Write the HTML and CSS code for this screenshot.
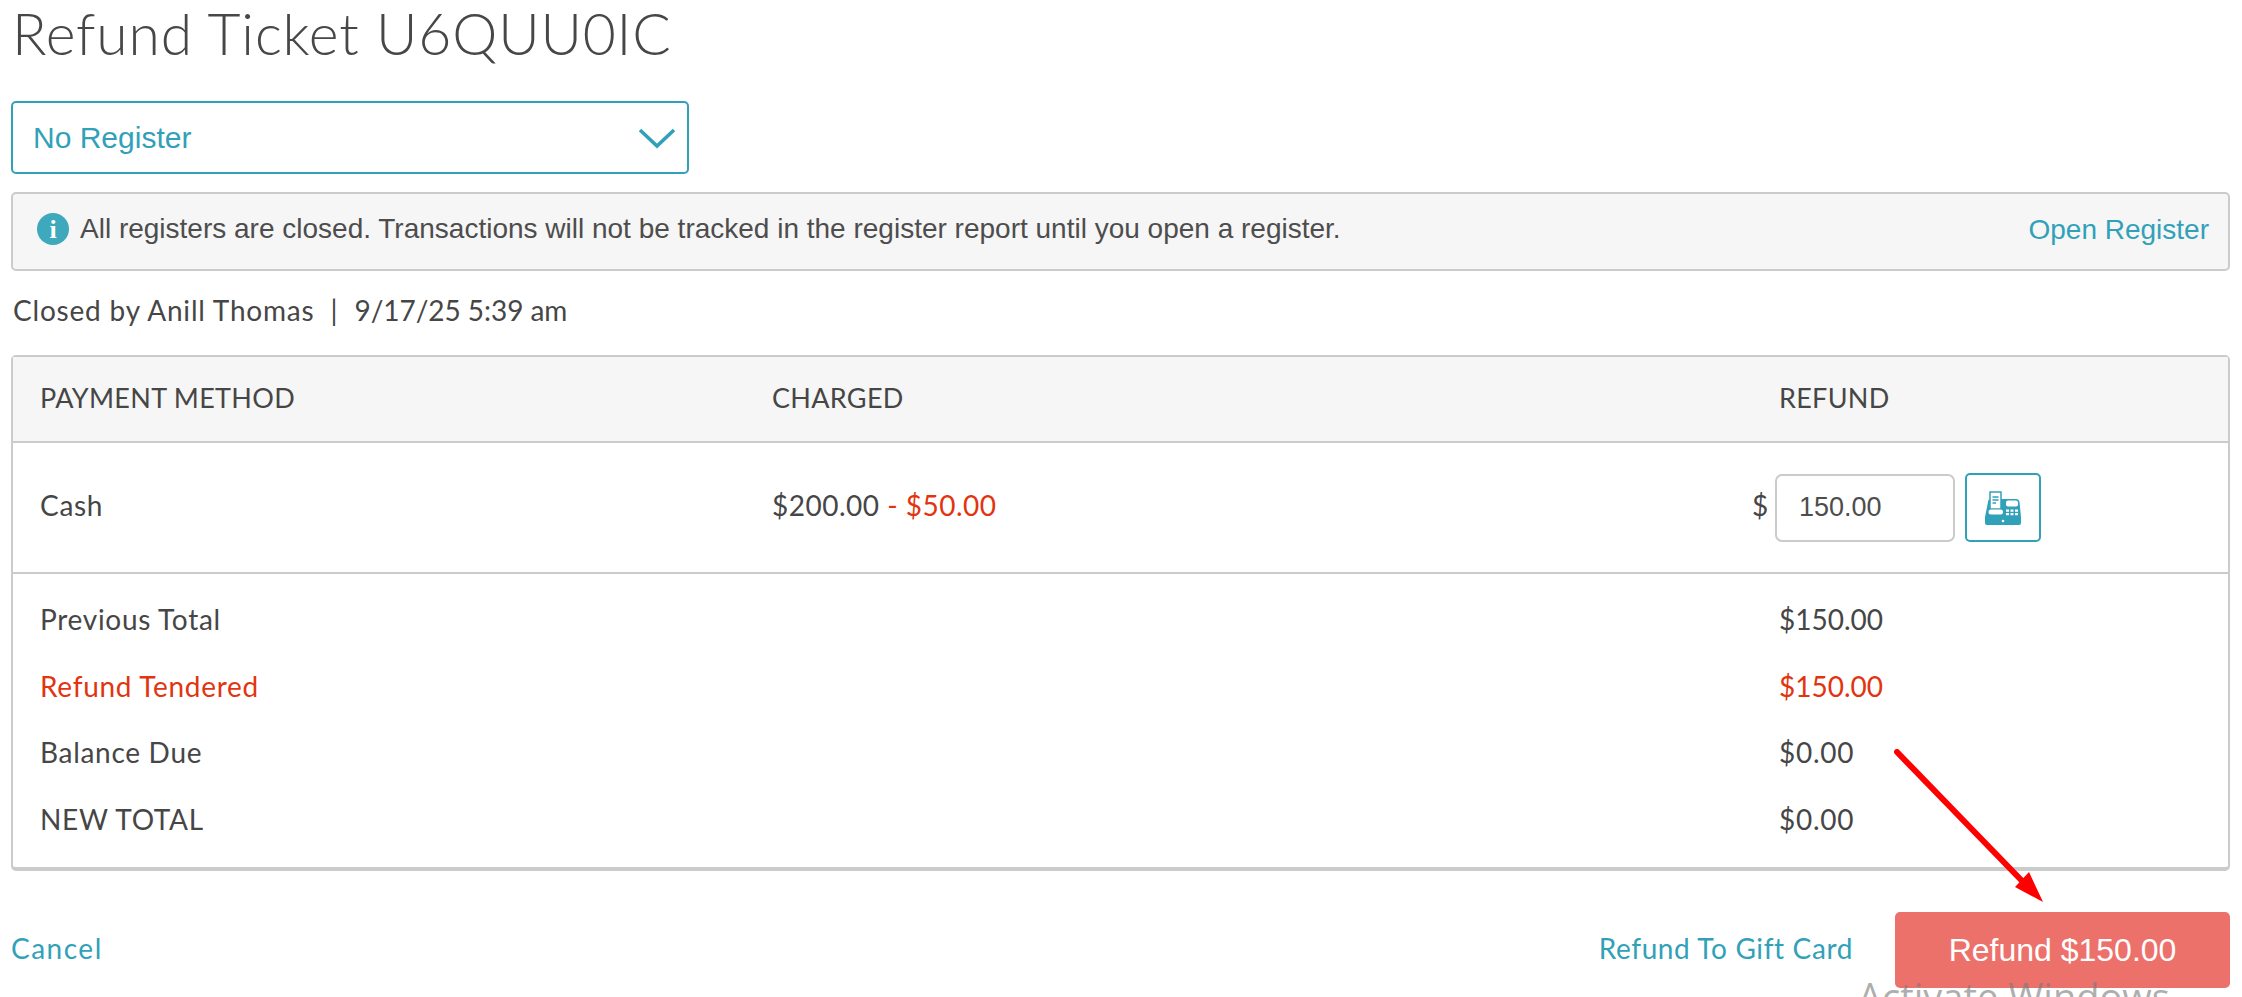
FILE: index.html
```html
<!DOCTYPE html>
<html lang="en">
<head>
<meta charset="utf-8">
<title>Refund Ticket U6QUU0IC</title>
<link rel="stylesheet" href="styles.css">
</head>
<body>
<main class="page">
  <h1 class="title">Refund Ticket U6QUU0IC</h1>
  <div class="select">
    <span>No Register</span>
    <svg class="chevron" width="38" height="22" viewBox="0 0 38 22"><path d="M2 3 L19 19 L36 3" fill="none" stroke="#31a1b9" stroke-width="3.6"/></svg>
  </div>
  <div class="alert">
    <div class="alert-msg">
      <span class="info-icon">i</span>
      <span>All registers are closed. Transactions will not be tracked in the register report until you open a register.</span>
    </div>
    <a class="open-link">Open Register</a>
  </div>
  <p class="closed"><span class="closed-by">Closed by Anill Thomas</span><span class="sep">|</span><span class="closed-at">9/17/25 5:39 am</span></p>
  <section class="panel">
    <div class="row head">
      <div>PAYMENT METHOD</div>
      <div class="span2">CHARGED</div>
      <div>REFUND</div>
    </div>
    <div class="row pay">
      <div class="txt">Cash</div>
      <div class="txt charged">$200.00 <span class="neg">- $50.00</span></div>
      <div class="txt dollar">$</div>
      <div class="refund-cell">
        <input class="amount" type="text" value="150.00">
        <button class="reg-btn" type="button" aria-label="Register">
          <svg width="36" height="34" viewBox="0 0 36 34">
            <path fill="#31a1b9" d="M3 11 q0 -3 3 -3 h25 q3 0 3.500 3 L36 26 H0 Z"/>
            <path fill="#31a1b9" d="M0 26 h36 v6 q0 2 -2 2 H2 q-2 0 -2 -2 Z"/>
            <rect x="5" y="1" width="11" height="17" fill="#fff" stroke="#31a1b9" stroke-width="1.500"/>
            <path d="M7.500 6h6M7.500 9h6M7.500 12h3.500" stroke="#31a1b9" stroke-width="1.600"/>
            <rect x="21" y="9.500" width="12" height="6" rx="2" fill="#fff"/>
            <rect x="3.500" y="18.500" width="14.500" height="5" rx="2.500" fill="#fff"/>
            <path d="M21 18.500h3v2.200h-3zM25.500 18.500h3v2.200h-3zM30 18.500h3v2.200h-3zM21 22h3v2.200h-3zM25.500 22h3v2.200h-3zM30 22h3v2.200h-3z" fill="#fff"/>
            <circle cx="18" cy="30" r="1.300" fill="#fff"/>
          </svg>
        </button>
      </div>
    </div>
    <div class="totals">
      <div class="row total"><div>Previous Total</div><div class="span2"></div><div class="tight">$150.00</div></div>
      <div class="row total neg"><div>Refund Tendered</div><div class="span2"></div><div class="tight">$150.00</div></div>
      <div class="row total"><div>Balance Due</div><div class="span2"></div><div>$0.00</div></div>
      <div class="row total"><div>NEW TOTAL</div><div class="span2"></div><div>$0.00</div></div>
    </div>
  </section>
  <footer class="footer">
    <a class="link cancel">Cancel</a>
    <div class="actions">
      <a class="link">Refund To Gift Card</a>
      <button class="refund-btn" type="button">Refund $150.00</button>
    </div>
  </footer>
</main>
<svg class="arrow" width="160" height="165" viewBox="0 0 160 165">
  <path d="M3 3 L132 136" stroke="#fe0000" stroke-width="6" stroke-linecap="round" fill="none"/>
  <path d="M149 153 L121 138 L135 123 Z" fill="#fe0000"/>
</svg>
<div class="watermark">Activate Windows</div>
</body>
</html>
```
FILE: styles.css
```css
html, body {
  margin: 0;
  padding: 0;
  height: 997px;
  overflow: hidden;
  background: #fff;
}
body {
  font-family: "Lato", "Liberation Sans", sans-serif;
  color: #464646;
  position: relative;
}
.page {
  padding: 0 12px 0 11px;
}
.title {
  margin: 0;
  height: 101px;
  padding: 2px 0 0 1px;
  box-sizing: border-box;
  font-size: 57px;
  line-height: 62px;
  font-weight: 300;
  color: #474747;
  letter-spacing: 0.85px;
}
.select {
  width: 678px;
  height: 73px;
  box-sizing: border-box;
  border: 2px solid #31a1b9;
  border-radius: 5px;
  display: flex;
  align-items: center;
  justify-content: space-between;
  padding: 0 11px 0 20px;
  font-family: "Liberation Sans", sans-serif;
  font-size: 30px;
  color: #31a1b9;
}
.alert {
  margin-top: 18px;
  height: 79px;
  box-sizing: border-box;
  border: 2px solid #cbcbcb;
  border-radius: 5px;
  background: #f6f6f6;
  display: flex;
  justify-content: space-between;
  padding: 0 19px 0 24px;
  font-family: "Liberation Sans", sans-serif;
}
.alert-msg {
  display: flex;
  align-items: center;
  gap: 11px;
  height: 70px;
  font-size: 28px;
  color: #4d4d4d;
}
.info-icon {
  width: 32px;
  height: 32px;
  border-radius: 50%;
  background: #3ea8bd;
  color: #fff;
  font-family: "Liberation Serif", serif;
  font-weight: 700;
  font-size: 26px;
  line-height: 33px;
  text-align: center;
}
.open-link {
  margin-top: 20px;
  font-size: 28px;
  color: #31a1b9;
}
.closed {
  display: flex;
  margin: 24px 0 0 2px;
  height: 60px;
  font-size: 28px;
  line-height: 30px;
}
.closed-by {
  letter-spacing: 0.8px;
}
.sep {
  margin: 0 17px 0 16px;
}
.closed-at {
  letter-spacing: -0.05px;
}
.panel {
  border: 2px solid #cbcbcb;
  border-bottom-width: 4px;
  border-radius: 5px;
  height: 516px;
  box-sizing: border-box;
}
.row {
  display: grid;
  grid-template-columns: 732px 977px 30px 1fr;
  align-items: center;
  padding-left: 27px;
  font-size: 28px;
  letter-spacing: 0.7px;
}
.span2 {
  grid-column: span 2;
}
.head {
  height: 86px;
  box-sizing: border-box;
  padding-bottom: 4px;
  background: #f6f6f6;
  border-bottom: 2px solid #cbcbcb;
  font-size: 27px;
  letter-spacing: 0.3px;
}
.pay {
  height: 131px;
  box-sizing: border-box;
  border-bottom: 2px solid #cbcbcb;
}
.txt {
  padding-bottom: 5px;
}
.charged {
  letter-spacing: 0.5px;
}
.dollar {
  padding-left: 3px;
}
.tight {
  letter-spacing: 0;
}
.neg {
  color: #e2340f;
}
.refund-cell {
  display: flex;
  align-items: center;
  gap: 10px;
  margin-left: -4px;
}
.amount {
  width: 180px;
  height: 68px;
  box-sizing: border-box;
  border: 2px solid #cbcbcb;
  border-radius: 7px;
  padding: 0 22px;
  font-family: "Liberation Sans", sans-serif;
  font-size: 27px;
  letter-spacing: 0;
  color: #4d4d4d;
  outline: none;
}
.reg-btn {
  width: 76px;
  height: 69px;
  box-sizing: border-box;
  border: 2px solid #31a1b9;
  border-radius: 5px;
  background: #fff;
  padding: 0;
  display: flex;
  align-items: center;
  justify-content: center;
}
.totals {
  padding-top: 12px;
}
.total {
  height: 66.500px;
}
.footer {
  margin-top: 41px;
  display: flex;
  justify-content: space-between;
  align-items: center;
}
.actions {
  display: flex;
  align-items: center;
  gap: 42px;
}
.link {
  font-size: 28px;
  letter-spacing: 0.62px;
  color: #31a1b9;
  padding-bottom: 4px;
}
.cancel {
  letter-spacing: 1.5px;
}
.refund-btn {
  width: 335px;
  height: 76px;
  border: 0;
  border-radius: 5px;
  background: #ed716b;
  color: #fff;
  font-family: "Liberation Sans", sans-serif;
  font-size: 32px;
}
.arrow {
  position: absolute;
  left: 1894px;
  top: 749px;
}
.watermark {
  position: absolute;
  left: 1858px;
  top: 971px;
  font-family: "Open Sans", sans-serif;
  font-size: 38px;
  line-height: 50px;
  color: rgba(120, 120, 120, 0.6);
  white-space: nowrap;
}
```
